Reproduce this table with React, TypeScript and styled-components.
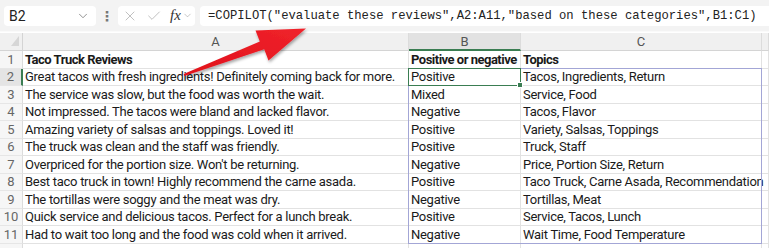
import styled, { createGlobalStyle } from "styled-components";
import { X, Check, ChevronDown } from "lucide-react";

const rows: [string, string, string][] = [
  ["Taco Truck Reviews", "Positive or negative", "Topics"],
  ["Great tacos with fresh ingredients! Definitely coming back for more.", "Positive", "Tacos, Ingredients, Return"],
  ["The service was slow, but the food was worth the wait.", "Mixed", "Service, Food"],
  ["Not impressed. The tacos were bland and lacked flavor.", "Negative", "Tacos, Flavor"],
  ["Amazing variety of salsas and toppings. Loved it!", "Positive", "Variety, Salsas, Toppings"],
  ["The truck was clean and the staff was friendly.", "Positive", "Truck, Staff"],
  ["Overpriced for the portion size. Won't be returning.", "Negative", "Price, Portion Size, Return"],
  ["Best taco truck in town! Highly recommend the carne asada.", "Positive", "Taco Truck, Carne Asada, Recommendation"],
  ["The tortillas were soggy and the meat was dry.", "Negative", "Tortillas, Meat"],
  ["Quick service and delicious tacos. Perfect for a lunch break.", "Positive", "Service, Tacos, Lunch"],
  ["Had to wait too long and the food was cold when it arrived.", "Negative", "Wait Time, Food Temperature"],
];

const GlobalStyle = createGlobalStyle`
  body {
    margin: 0;
    background: #fff;
    font-family: Roboto, "Liberation Sans", sans-serif;
  }
`;

function App() {
  return (
    <Page>
      <GlobalStyle />
      <Toolbar>
        <NameBox>
          <span>B2</span>
          <ChevronDown size={14} strokeWidth={1.2} color="#666" />
        </NameBox>
        <Dots>⋮</Dots>
        <FxBox>
          <X size={16} strokeWidth={1} color="#a0a0a0" />
          <Check size={16} strokeWidth={1} color="#a0a0a0" />
          <Fx>
            fx
            <ChevronDown size={11} strokeWidth={1} color="#888" />
          </Fx>
        </FxBox>
        <Formula>
          =COPILOT("evaluate these reviews",A2:A11,"based on these categories",B1:C1)
        </Formula>
      </Toolbar>

      <Sheet>
        <Corner>
          <svg width="8" height="10" viewBox="0 0 8 10">
            <path d="M8 0 L8 10 L0 10 Z" fill="#d6d6d6" />
          </svg>
        </Corner>
        <ColHead $c={2}>A</ColHead>
        <ColHead $c={3} $active>B</ColHead>
        <ColHead $c={4}>C</ColHead>
        <ColHead $c={5} />

        {rows.map((r, i) => (
          <Row key={i} n={i + 1} cells={r} />
        ))}
        <RowHead $r={13} $partial />
        {[2, 3, 4, 5].map((c) => (
          <Cell key={c} $r={13} $c={c} $partial />
        ))}

        <Spill />
        <Active>
          <Handle />
        </Active>
      </Sheet>

      <Arrow width="769" height="248" viewBox="0 0 769 248">
        <defs>
          <linearGradient id="red" x1="0" y1="1" x2="1" y2="0">
            <stop offset="0" stopColor="#e0111b" />
            <stop offset="1" stopColor="#f0232b" />
          </linearGradient>
          <filter id="sh" x="-20%" y="-20%" width="140%" height="160%">
            <feDropShadow dx="1" dy="2" stdDeviation="1.5" floodColor="#000" floodOpacity="0.35" />
          </filter>
        </defs>
        <polygon
          points="183.6,74 259.8,41.5 255.5,30.5 306,28.5 268.5,60.5 264.2,49.3 184.4,76"
          fill="url(#red)"
          filter="url(#sh)"
        />
      </Arrow>
    </Page>
  );
}

function Row({ n, cells }: { n: number; cells: [string, string, string] }) {
  const r = n + 1;
  return (
    <>
      <RowHead $r={r} $active={n === 2}>{n}</RowHead>
      {cells.map((text, i) => (
        <Cell key={i} $r={r} $c={i + 2} $bold={n === 1} $spill={i === 2}>
          {text}
        </Cell>
      ))}
      <Cell $r={r} $c={5} />
    </>
  );
}

export default App;

const Page = styled.div`
  position: relative;
  width: 769px;
  height: 248px;
  overflow: hidden;
  background: #fff;
`;

const Toolbar = styled.div`
  display: flex;
  align-items: center;
  height: 31px;
  padding-left: 4px;
  background: #f3f3f3;
  border-bottom: 1px solid #fafafa;
`;

const Box = styled.div`
  display: flex;
  align-items: center;
  height: 20px;
  background: #fff;
  border-radius: 4px;
  box-sizing: border-box;
`;

const NameBox = styled(Box)`
  width: 92px;
  padding: 0 6px 0 5px;
  justify-content: space-between;
  font-family: Roboto, "Liberation Sans", sans-serif;
  font-size: 14px;
  color: #222;
`;

const Dots = styled.div`
  width: 22px;
  text-align: center;
  color: #777;
  font-size: 14px;
  font-weight: bold;
  font-family: "DejaVu Sans", sans-serif;
`;

const FxBox = styled(Box)`
  width: 77px;
  gap: 8px;
  padding-left: 4px;
`;

const Fx = styled.span`
  display: flex;
  align-items: center;
  gap: 1px;
  font-family: "Liberation Serif", serif;
  font-style: italic;
  font-size: 15px;
  color: #333;
`;

const Formula = styled(Box)`
  flex: 1;
  margin-left: 5px;
  padding-left: 8px;
  white-space: nowrap;
  font-family: "Liberation Mono", monospace;
  font-size: 12.2px;
  color: #222;
  border-radius: 4px 0 0 4px;
`;

const Sheet = styled.div`
  display: grid;
  grid-template-columns: 23px 386px 112px 241px 1fr;
  grid-template-rows: 18px repeat(11, 17.5px) 10px;
  border-top: 1px solid #fff;
`;

const Corner = styled.div`
  grid-row: 1;
  grid-column: 1;
  display: flex;
  align-items: flex-end;
  justify-content: flex-end;
  padding: 0 3px 4px 0;
  background: #f0f0f0;
  border-bottom: 1px solid #d4d4d4;
  border-right: 1px solid #d4d4d4;
`;

const ColHead = styled.div<{ $c: number; $active?: boolean }>`
  grid-row: 1;
  grid-column: ${(p) => p.$c};
  display: flex;
  align-items: center;
  justify-content: center;
  font-family: Roboto, "Liberation Sans", sans-serif;
  font-size: 13px;
  color: #555;
  background: ${(p) => (p.$active ? "#e2e2e2" : "#f0f0f0")};
  border-right: 1px solid #dcdcdc;
  border-bottom: ${(p) => (p.$active ? "2px solid #3a7d52" : "1px solid #d4d4d4")};
`;

const RowHead = styled.div<{ $r: number; $active?: boolean; $partial?: boolean }>`
  grid-row: ${(p) => p.$r};
  grid-column: 1;
  display: flex;
  align-items: flex-end;
  justify-content: center;
  padding-bottom: 1px;
  font-family: Roboto, "Liberation Sans", sans-serif;
  font-size: 13px;
  color: #666;
  background: ${(p) => (p.$active ? "#e4e4e4" : "#f6f6f6")};
  border-right: ${(p) => (p.$active ? "2px solid #3a7d52" : "1px solid #dcdcdc")};
  border-bottom: ${(p) => (p.$partial ? "none" : "1px solid #e6e6e6")};
`;

const Cell = styled.div<{
  $r: number;
  $c: number;
  $bold?: boolean;
  $partial?: boolean;
  $spill?: boolean;
}>`
  grid-row: ${(p) => p.$r};
  grid-column: ${(p) => p.$c};
  display: flex;
  align-items: flex-end;
  padding: 0 0 1px 2px;
  white-space: nowrap;
  overflow: ${(p) => (p.$spill ? "visible" : "hidden")};
  font-size: 13px;
  letter-spacing: ${(p) => (p.$bold ? "-0.5px" : "-0.28px")};
  font-weight: ${(p) => (p.$bold ? "bold" : "normal")};
  color: #1a1a1a;
  border-right: 1px solid #e2e2e2;
  border-bottom: ${(p) => (p.$partial ? "none" : "1px solid #e2e2e2")};
`;

const Spill = styled.div`
  grid-row: 3 / 13;
  grid-column: 3 / 5;
  border: 1.5px solid #a3a6d6;
  margin: -1px 0 0 -1px;
  pointer-events: none;
`;

const Active = styled.div`
  grid-row: 3 / 4;
  grid-column: 3 / 4;
  position: relative;
  border: 1.5px solid #3a7d52;
  margin: -1px 0 0 -1px;
  pointer-events: none;
`;

const Handle = styled.div`
  position: absolute;
  right: -3px;
  bottom: -3px;
  width: 4px;
  height: 4px;
  background: #3a7d52;
  border: 1px solid #fff;
`;

const Arrow = styled.svg`
  position: absolute;
  left: 0;
  top: 0;
  pointer-events: none;
`;
